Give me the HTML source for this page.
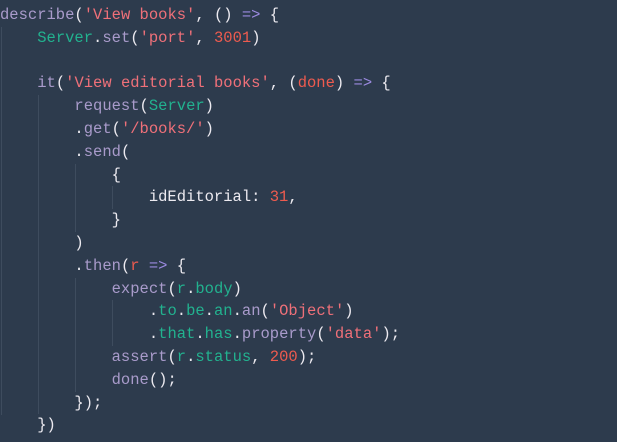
<!DOCTYPE html>
<html><head><meta charset="utf-8"><style>
html,body{margin:0;padding:0;}
body{width:617px;height:442px;background:#2d3b4d;overflow:hidden;position:relative;}
pre{margin:0;position:absolute;left:0;top:4px;font-family:"Liberation Mono",monospace;font-size:15.5px;line-height:22.8px;color:#eceaf0;}
.f{color:#a99bcb}.s{color:#ef7079}.n{color:#ee5b4f}.g{color:#22b28f}.k{color:#9b8ae0}.w{color:#e6e3ec}
.gd{position:absolute;width:1px;background:#3e4c5e;}
</style></head><body>
<div class="gd" style="left:1px;top:26.8px;height:388px"></div>
<div class="gd" style="left:38px;top:95.2px;height:319px"></div>
<div class="gd" style="left:75px;top:163.6px;height:68.4px"></div>
<div class="gd" style="left:112px;top:186.4px;height:22.8px"></div>
<div class="gd" style="left:75px;top:277.6px;height:114px"></div>
<div class="gd" style="left:112px;top:300.4px;height:45.6px"></div>
<pre><span class="f">describe</span>(<span class="s">'View books'</span>, () <span class="k">=&gt;</span> {
    <span class="g">Server</span>.<span class="f">set</span>(<span class="s">'port'</span>, <span class="n">3001</span>)

    <span class="f">it</span>(<span class="s">'View editorial books'</span>, (<span class="n">done</span>) <span class="k">=&gt;</span> {
        <span class="f">request</span>(<span class="g">Server</span>)
        .<span class="f">get</span>(<span class="s">'/books/'</span>)
        .<span class="f">send</span>(
            {
                idEditorial: <span class="n">31</span>,
            }
        )
        .<span class="f">then</span>(<span class="n">r</span> <span class="k">=&gt;</span> {
            <span class="f">expect</span>(<span class="g">r</span>.<span class="g">body</span>)
                .<span class="g">to</span>.<span class="g">be</span>.<span class="g">an</span>.<span class="f">an</span>(<span class="s">'Object'</span>)
                .<span class="g">that</span>.<span class="g">has</span>.<span class="f">property</span>(<span class="s">'data'</span>);
            <span class="f">assert</span>(<span class="g">r</span>.<span class="g">status</span>, <span class="n">200</span>);
            <span class="f">done</span>();
        });
    })</pre>
</body></html>
